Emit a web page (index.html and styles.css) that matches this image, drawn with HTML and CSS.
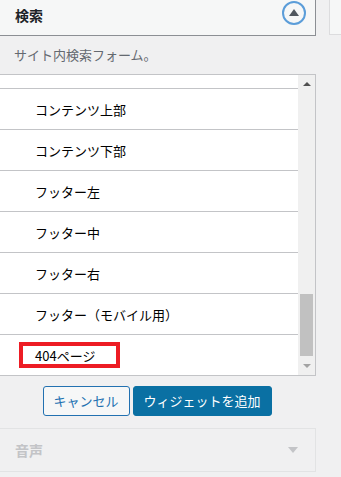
FILE: index.html
```html
<!DOCTYPE html>
<html lang="ja">
<head>
<meta charset="utf-8">
<link rel="stylesheet" href="styles.css">
</head>
<body>
<div class="page">
  <div class="main">
    <div class="header">
      <span class="title">検索</span>
      <span class="toggle"><svg width="10" height="7" viewBox="0 0 10 7"><polygon points="5,0 10,7 0,7" fill="#50575e"/></svg></span>
    </div>
    <p class="desc">サイト内検索フォーム。</p>
    <div class="listbox">
      <div class="list">
        <div class="row"></div>
        <div class="row">コンテンツ上部</div>
        <div class="row">コンテンツ下部</div>
        <div class="row">フッター左</div>
        <div class="row">フッター中</div>
        <div class="row">フッター右</div>
        <div class="row">フッター（モバイル用）</div>
        <div class="row last">404ページ<span class="mark"></span></div>
      </div>
      <div class="scrollbar">
        <span class="arrow up"></span>
        <span class="track"><span class="thumb"></span></span>
        <span class="arrow down"></span>
      </div>
    </div>
    <div class="actions">
      <button class="btn cancel">キャンセル</button>
      <button class="btn primary">ウィジェットを追加</button>
    </div>
    <div class="next">
      <span class="next-title">音声</span>
      <span class="caret"></span>
    </div>
  </div>
  <div class="side"></div>
</div>
</body>
</html>
```
FILE: styles.css
```css
* { box-sizing: border-box; }
html, body { margin: 0; padding: 0; }
body {
  background: #f0f0f1;
  font-family: "Noto Sans CJK JP", "Noto Sans", sans-serif;
  font-size: 13px;
  color: #1d2327;
  width: 341px;
  height: 477px;
  overflow: hidden;
}
.page {
  display: flex;
  gap: 13px;
}
.main {
  width: 316px;
  flex: none;
}
.side {
  flex: 1;
  height: 35px;
  background: #f6f7f7;
  border-left: 1px solid #dcdcde;
  border-bottom: 1px solid #dcdcde;
}
.header {
  height: 36px;
  background: #f6f7f7;
  border-right: 1px solid #8c8f94;
  border-bottom: 1px solid #8c8f94;
  display: flex;
  align-items: flex-start;
  justify-content: space-between;
  padding: 5px 9px 0 15px;
}
.title {
  font-size: 14px;
  font-weight: bold;
  line-height: 20px;
}
.toggle {
  width: 24px;
  height: 24px;
  margin-top: -4px;
  border: 2px solid #5b9dd9;
  border-radius: 50%;
  display: flex;
  align-items: center;
  justify-content: center;
  padding-bottom: 1px;
}
.desc {
  margin: 0;
  height: 38px;
  padding: 10px 14px;
  line-height: 18px;
  color: #646970;
}
.listbox {
  height: 302px;
  background: #fff;
  border-top: 1px solid #c3c4c7;
  border-bottom: 1px solid #c3c4c7;
  border-right: 1px solid #c3c4c7;
  display: flex;
  overflow: hidden;
}
.list {
  flex: 1;
  margin-top: -27px;
}
.row {
  height: 41px;
  border-bottom: 1px solid #c3c4c7;
  padding-left: 35px;
  display: flex;
  align-items: center;
  color: #000;
  position: relative;
}
.row.last { border-bottom: none; height: 40px; }
.mark {
  position: absolute;
  left: 19px;
  top: 7px;
  width: 101px;
  height: 26px;
  border: 4px solid #ed1c24;
}
.scrollbar {
  width: 17px;
  flex: none;
  background: #f0f0f0;
  display: flex;
  flex-direction: column;
  align-items: center;
}
.arrow {
  width: 0;
  height: 0;
  border-left: 4px solid transparent;
  border-right: 4px solid transparent;
}
.arrow.up {
  margin-top: 7px;
  border-bottom: 4px solid #505050;
}
.arrow.down {
  margin-top: 7px;
  border-top: 4px solid #a3a3a3;
}
.track {
  flex: 1;
  width: 13px;
  display: flex;
  flex-direction: column;
  justify-content: flex-end;
}
.thumb {
  height: 62px;
  background: #c1c1c1;
  margin-bottom: 1px;
}
.scrollbar .arrow.down { margin-bottom: 7px; }
.actions {
  display: flex;
  justify-content: center;
  gap: 3px;
  margin-top: 10px;
  padding-right: 2px;
}
.btn {
  font-family: inherit;
  font-size: 13px;
  height: 30px;
  border-radius: 3px;
  padding: 0 10px;
  line-height: 28px;
}
.cancel {
  width: 87px;
  background: #f6f7f7;
  border: 1px solid #2271b1;
  color: #2271b1;
}
.primary {
  width: 139px;
  background: #0a70a3;
  border: 1px solid #0a70a3;
  color: #fff;
}
.next {
  margin-top: 12px;
  height: 44px;
  border: 1px solid #e2e3e4;
  border-left: none;
  display: flex;
  align-items: center;
  justify-content: space-between;
  padding: 0 17px 0 15px;
}
.next-title {
  color: #c3c4c7;
  font-weight: bold;
  font-size: 14px;
}
.caret {
  width: 0;
  height: 0;
  border-left: 5px solid transparent;
  border-right: 5px solid transparent;
  border-top: 6px solid #c3c4c7;
}
```
